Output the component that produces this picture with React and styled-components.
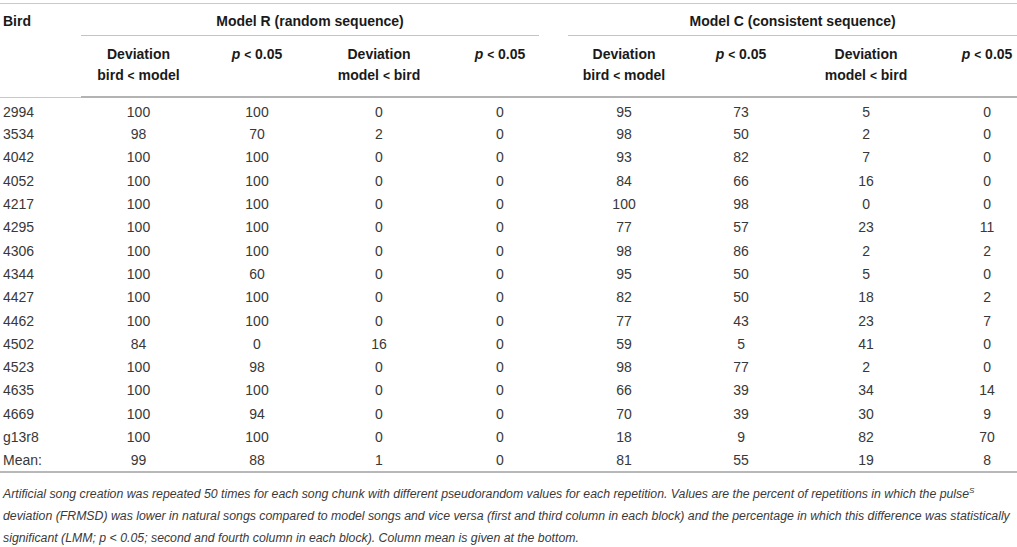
import styled, { createGlobalStyle } from "styled-components";

const GlobalStyle = createGlobalStyle`
  html, body { margin: 0; padding: 0; background: #fff; }
  body {
    font-family: "Liberation Sans", Arial, Helvetica, sans-serif;
    overflow: hidden;
  }
`;

const Page = styled.div`
  width: 1017px;
  overflow: hidden;
  padding-top: 3px;
`;

const Table = styled.table`
  width: 1036px;
  table-layout: fixed;
  border-collapse: collapse;
  border-top: 1px solid #c9c9c9;
  font-size: 14px;
  color: #383838;
`;

const Col = styled.col`
  width: ${(p) => p.$w}px;
`;

const BirdHead = styled.th`
  text-align: left;
  vertical-align: top;
  padding: 7px 0 0 3px;
  line-height: 20px;
  font-weight: bold;
  color: #1a1a1a;
  border-bottom: 1px solid #c9c9c9;
`;

const GroupHead = styled.th`
  padding: 0;
  font-weight: bold;
  color: #1a1a1a;
`;

const GroupLabel = styled.div`
  margin: ${(p) => `0 ${p.$mr}px 0 ${p.$ml}px`};
  padding: 7px ${(p) => p.$pr}px 4px 0;
  line-height: 20px;
  text-align: center;
  border-bottom: 1px solid #c4c4c4;
`;

const SubHead = styled.th`
  padding: 8px 0 9px;
  line-height: 21px;
  vertical-align: top;
  text-align: center;
  font-weight: bold;
  color: #1a1a1a;
  border-bottom: 2px solid #b3b3b3;

  small {
    font-size: 12px;
  }
`;

const Row = styled.tr`
  height: 23.3px;
`;

const Cell = styled.td`
  padding: ${(p) => (p.$first ? "4px" : "0")} 0 0 ${(p) => (p.$label ? "3px" : "0")};
  line-height: 21px;
  text-align: ${(p) => (p.$label ? "left" : "center")};
  border-bottom: ${(p) => (p.$last ? "2px solid #b8b8b8" : "none")};
`;

const Caption = styled.p`
  margin: 0;
  padding: 10px 0 0 3px;
  font-size: 12.3px;
  line-height: 22px;
  font-style: italic;
  color: #3a3a3a;
  white-space: nowrap;

  sup {
    font-size: 8px;
    line-height: 0;
    vertical-align: 5px;
  }
`;

const widths = [81, 115, 122, 122, 120, 128, 106, 144, 98];

const rows = [
  ["2994", 100, 100, 0, 0, 95, 73, 5, 0],
  ["3534", 98, 70, 2, 0, 98, 50, 2, 0],
  ["4042", 100, 100, 0, 0, 93, 82, 7, 0],
  ["4052", 100, 100, 0, 0, 84, 66, 16, 0],
  ["4217", 100, 100, 0, 0, 100, 98, 0, 0],
  ["4295", 100, 100, 0, 0, 77, 57, 23, 11],
  ["4306", 100, 100, 0, 0, 98, 86, 2, 2],
  ["4344", 100, 60, 0, 0, 95, 50, 5, 0],
  ["4427", 100, 100, 0, 0, 82, 50, 18, 2],
  ["4462", 100, 100, 0, 0, 77, 43, 23, 7],
  ["4502", 84, 0, 16, 0, 59, 5, 41, 0],
  ["4523", 100, 98, 0, 0, 98, 77, 2, 0],
  ["4635", 100, 100, 0, 0, 66, 39, 34, 14],
  ["4669", 100, 94, 0, 0, 70, 39, 30, 9],
  ["g13r8", 100, 100, 0, 0, 18, 9, 82, 70],
  ["Mean:", 99, 88, 1, 0, 81, 55, 19, 8],
];

const PValue = () => (
  <>
    <i>p</i> <small>&lt;</small> 0.05
  </>
);

const Lt = () => <small>&lt;</small>;

const subHeads = [
  ["Deviation", <>bird <Lt /> model</>],
  [<PValue key="p" />],
  ["Deviation", <>model <Lt /> bird</>],
  [<PValue key="p" />],
];

function SubHeads() {
  return [...subHeads, ...subHeads].map((lines, i) => (
    <SubHead key={i}>
      {lines.map((l, j) => (
        <div key={j}>{l}</div>
      ))}
    </SubHead>
  ));
}

export default function App() {
  return (
    <Page>
      <GlobalStyle />
      <Table>
        <colgroup>
          {widths.map((w, i) => (
            <Col key={i} $w={w} />
          ))}
        </colgroup>
        <thead>
          <tr>
            <BirdHead rowSpan={2}>Bird</BirdHead>
            <GroupHead colSpan={4}>
              <GroupLabel $ml={0} $mr={21} $pr={0}>
                Model R (random sequence)
              </GroupLabel>
            </GroupHead>
            <GroupHead colSpan={4}>
              <GroupLabel $ml={8} $mr={0} $pr={19}>
                Model C (consistent sequence)
              </GroupLabel>
            </GroupHead>
          </tr>
          <tr>
            <SubHeads />
          </tr>
        </thead>
        <tbody>
          {rows.map((r, i) => (
            <Row key={r[0]}>
              {r.map((v, j) => (
                <Cell
                  key={j}
                  $label={j === 0}
                  $first={i === 0}
                  $last={i === rows.length - 1}
                >
                  {v}
                </Cell>
              ))}
            </Row>
          ))}
        </tbody>
      </Table>
      <Caption>
        Artificial song creation was repeated 50 times for each song chunk with
        different pseudorandom values for each repetition. Values are the
        percent of repetitions in which the pulse<sup>S</sup>
        <br />
        deviation (FRMSD) was lower in natural songs compared to model songs and
        vice versa (first and third column in each block) and the percentage in
        which this difference was statistically
        <br />
        significant (LMM; <i>p</i> &lt; 0.05; second and fourth column in each
        block). Column mean is given at the bottom.
      </Caption>
    </Page>
  );
}
